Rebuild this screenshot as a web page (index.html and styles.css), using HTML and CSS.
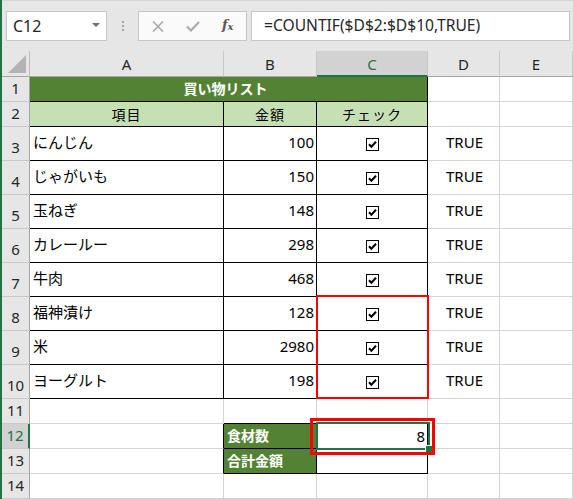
FILE: index.html
```html
<!DOCTYPE html>
<html lang="ja">
<head>
<meta charset="utf-8">
<link rel="stylesheet" href="styles.css">
</head>
<body>
<div class="app">
  <div class="fbar">
    <div class="namebox"><span class="nb-text">C12</span><span class="arrow"></span></div>
    <div class="grip"><i></i><i></i><i></i></div>
    <div class="btns">
      <svg class="ico" width="12" height="11" viewBox="0 0 12 11"><path d="M1 0.5 L11 10.5 M11 0.5 L1 10.5" stroke="#a9a9a9" stroke-width="1.6" fill="none"/></svg>
      <svg class="ico" width="14" height="11" viewBox="0 0 14 11"><path d="M1 5.5 L5 9.5 L13 1" stroke="#a9a9a9" stroke-width="2" fill="none"/></svg>
      <span class="fx">f<sub>x</sub></span>
    </div>
    <div class="formula">=COUNTIF($D$2:$D$10,TRUE)</div>
  </div>

  <div class="sheet">
    <!-- header -->
    <div class="corner"><span class="tri"></span></div>
    <div class="ch">A</div>
    <div class="ch">B</div>
    <div class="ch sel">C</div>
    <div class="ch">D</div>
    <div class="ch">E</div>

    <!-- row 1 -->
    <div class="rh">1</div>
    <div class="c title bk-r bk-b">買い物リスト</div>
    <div class="c"></div>
    <div class="c"></div>

    <!-- row 2 -->
    <div class="rh">2</div>
    <div class="c head bk-r bk-b">項目</div>
    <div class="c head bk-r bk-b">金額</div>
    <div class="c head bk-r bk-b">チェック</div>
    <div class="c"></div>
    <div class="c"></div>

    <!-- row 3 -->
    <div class="rh">3</div>
    <div class="c bk-r bk-b">にんじん</div>
    <div class="c num bk-r bk-b">100</div>
    <div class="c chk bk-r bk-b"><svg width="13" height="13" viewBox="0 0 13 13"><rect x="0.5" y="0.5" width="12" height="12" fill="#fff" stroke="#000"/><path d="M3 6.3 L5.4 8.8 L10 3.8" fill="none" stroke="#000" stroke-width="2"/></svg></div>
    <div class="c bool">TRUE</div>
    <div class="c"></div>

    <!-- row 4 -->
    <div class="rh">4</div>
    <div class="c bk-r bk-b">じゃがいも</div>
    <div class="c num bk-r bk-b">150</div>
    <div class="c chk bk-r bk-b"><svg width="13" height="13" viewBox="0 0 13 13"><rect x="0.5" y="0.5" width="12" height="12" fill="#fff" stroke="#000"/><path d="M3 6.3 L5.4 8.8 L10 3.8" fill="none" stroke="#000" stroke-width="2"/></svg></div>
    <div class="c bool">TRUE</div>
    <div class="c"></div>

    <!-- row 5 -->
    <div class="rh">5</div>
    <div class="c bk-r bk-b">玉ねぎ</div>
    <div class="c num bk-r bk-b">148</div>
    <div class="c chk bk-r bk-b"><svg width="13" height="13" viewBox="0 0 13 13"><rect x="0.5" y="0.5" width="12" height="12" fill="#fff" stroke="#000"/><path d="M3 6.3 L5.4 8.8 L10 3.8" fill="none" stroke="#000" stroke-width="2"/></svg></div>
    <div class="c bool">TRUE</div>
    <div class="c"></div>

    <!-- row 6 -->
    <div class="rh">6</div>
    <div class="c bk-r bk-b">カレールー</div>
    <div class="c num bk-r bk-b">298</div>
    <div class="c chk bk-r bk-b"><svg width="13" height="13" viewBox="0 0 13 13"><rect x="0.5" y="0.5" width="12" height="12" fill="#fff" stroke="#000"/><path d="M3 6.3 L5.4 8.8 L10 3.8" fill="none" stroke="#000" stroke-width="2"/></svg></div>
    <div class="c bool">TRUE</div>
    <div class="c"></div>

    <!-- row 7 -->
    <div class="rh">7</div>
    <div class="c bk-r bk-b">牛肉</div>
    <div class="c num bk-r bk-b">468</div>
    <div class="c chk bk-r bk-b"><svg width="13" height="13" viewBox="0 0 13 13"><rect x="0.5" y="0.5" width="12" height="12" fill="#fff" stroke="#000"/><path d="M3 6.3 L5.4 8.8 L10 3.8" fill="none" stroke="#000" stroke-width="2"/></svg></div>
    <div class="c bool">TRUE</div>
    <div class="c"></div>

    <!-- row 8 -->
    <div class="rh">8</div>
    <div class="c bk-r bk-b">福神漬け</div>
    <div class="c num bk-r bk-b">128</div>
    <div class="c chk bk-r bk-b"><svg width="13" height="13" viewBox="0 0 13 13"><rect x="0.5" y="0.5" width="12" height="12" fill="#fff" stroke="#000"/><path d="M3 6.3 L5.4 8.8 L10 3.8" fill="none" stroke="#000" stroke-width="2"/></svg></div>
    <div class="c bool">TRUE</div>
    <div class="c"></div>

    <!-- row 9 -->
    <div class="rh">9</div>
    <div class="c bk-r bk-b">米</div>
    <div class="c num bk-r bk-b">2980</div>
    <div class="c chk bk-r bk-b"><svg width="13" height="13" viewBox="0 0 13 13"><rect x="0.5" y="0.5" width="12" height="12" fill="#fff" stroke="#000"/><path d="M3 6.3 L5.4 8.8 L10 3.8" fill="none" stroke="#000" stroke-width="2"/></svg></div>
    <div class="c bool">TRUE</div>
    <div class="c"></div>

    <!-- row 10 -->
    <div class="rh">10</div>
    <div class="c bk-r bk-b">ヨーグルト</div>
    <div class="c num bk-r bk-b">198</div>
    <div class="c chk bk-r bk-b"><svg width="13" height="13" viewBox="0 0 13 13"><rect x="0.5" y="0.5" width="12" height="12" fill="#fff" stroke="#000"/><path d="M3 6.3 L5.4 8.8 L10 3.8" fill="none" stroke="#000" stroke-width="2"/></svg></div>
    <div class="c bool">TRUE</div>
    <div class="c"></div>

    <!-- row 11 -->
    <div class="rh">11</div>
    <div class="c"></div>
    <div class="c bk-b"></div>
    <div class="c bk-b"></div>
    <div class="c"></div>
    <div class="c"></div>

    <!-- row 12 -->
    <div class="rh sel">12</div>
    <div class="c bk-r"></div>
    <div class="c label bk-r bk-b">食材数</div>
    <div class="c num short bk-r bk-b">8</div>
    <div class="c"></div>
    <div class="c"></div>

    <!-- row 13 -->
    <div class="rh">13</div>
    <div class="c bk-r"></div>
    <div class="c label bk-r bk-b">合計金額</div>
    <div class="c bk-r bk-b"></div>
    <div class="c"></div>
    <div class="c"></div>

    <!-- row 14 -->
    <div class="rh">14</div>
    <div class="c"></div>
    <div class="c"></div>
    <div class="c"></div>
    <div class="c"></div>
    <div class="c"></div>
  </div>

  <div class="selection"></div>
  <div class="handle"></div>
  <div class="redbox red-range"></div>
  <div class="redbox red-cell"></div>
</div>
</body>
</html>
```

FILE: styles.css
```css
* { box-sizing: border-box; }
html, body { margin: 0; padding: 0; }
body {
  width: 573px;
  height: 499px;
  overflow: hidden;
  background: #e6e6e6;
  font-family: "Noto Sans", "Noto Sans CJK JP", sans-serif;
}
.app {
  position: relative;
  width: 573px;
  height: 499px;
  overflow: hidden;
}
.app::before {
  content: "";
  position: absolute;
  left: 0; top: 0;
  width: 2px; height: 100%;
  background: #217346;
  z-index: 5;
}

/* formula bar */
.fbar {
  height: 51px;
  display: flex;
  align-items: flex-start;
  padding: 11px 0 0 6px;
  border-top: 1px solid #d5d5d5;
  background: #e6e6e6;
}
.namebox {
  width: 101px;
  height: 30px;
  margin-top: -1px;
  background: #fff;
  border: 1px solid #c6c6c6;
  display: flex;
  align-items: center;
  justify-content: space-between;
  padding: 0 6px 0 6px;
}
.nb-text {
  font-size: 16px;
  color: #262626;
}
.arrow {
  width: 0; height: 0;
  border-left: 4px solid transparent;
  border-right: 4px solid transparent;
  border-top: 4px solid #707070;
  margin-top: -2px;
}
.grip {
  width: 31px;
  height: 30px;
  display: flex;
  flex-direction: column;
  align-items: center;
  justify-content: center;
  gap: 2px;
  margin-top: -1px;
}
.grip i {
  display: block;
  width: 2px;
  height: 2px;
  background: #a6a6a6;
}
.btns {
  width: 109px;
  height: 30px;
  margin-top: -1px;
  background: #fafafa;
  border: 1px solid #c6c6c6;
  display: flex;
  align-items: center;
  padding-left: 13px;
}
.btns .ico:nth-child(1) { margin-right: 22px; }
.btns .ico:nth-child(2) { margin-right: 22px; }
.fx {
  font-family: "DejaVu Serif", "Liberation Serif", serif;
  font-style: italic;
  font-weight: bold;
  font-size: 13px;
  color: #595959;
  margin-top: -4px;
}
.fx sub {
  font-size: 10px;
  vertical-align: -1px;
}
.formula {
  margin-left: 4px;
  margin-top: -1px;
  width: 319px;
  height: 30px;
  background: #fff;
  border: 1px solid #c6c6c6;
  font-size: 15.6px;
  color: #262626;
  line-height: 27px;
  padding-left: 12px;
}

/* sheet grid */
.sheet {
  display: grid;
  grid-template-columns: 30px 194px 93px 111px 72px 1fr;
  grid-template-rows: 26px 25px 25px repeat(8, 34px) repeat(4, 25px);
  background: #fff;
  height: 448px;
}
.corner {
  background: #e6e6e6;
  border-right: 1px solid #bdbdbd;
  border-bottom: 1px solid #a6a6a6;
  position: relative;
}
.tri {
  position: absolute;
  right: 3px;
  bottom: 3px;
  width: 18px;
  height: 18px;
  background: #b4b4b4;
  clip-path: polygon(100% 0, 100% 100%, 0 100%);
}
.ch {
  background: #e6e6e6;
  border-right: 1px solid #c8c8c8;
  border-bottom: 1px solid #a6a6a6;
  display: flex;
  align-items: center;
  justify-content: center;
  font-size: 15px;
  color: #262626;
  padding-top: 1px;
}
.ch.sel {
  background: #d2d2d2;
  color: #217346;
  border-bottom: 2px solid #217346;
}
.rh {
  background: #e6e6e6;
  border-right: 1px solid #a6a6a6;
  border-bottom: 1px solid #c8c8c8;
  display: flex;
  align-items: flex-end;
  justify-content: center;
  font-size: 15px;
  line-height: 21px;
  padding-bottom: 2px;
  padding-left: 2px;
  color: #262626;
}
.rh.sel {
  background: #d2d2d2;
  color: #217346;
  border-right: 2px solid #217346;
}
.c {
  border-right: 1px solid #d4d4d4;
  border-bottom: 1px solid #d4d4d4;
  display: flex;
  align-items: center;
  padding: 0 3px 4px 3px;
  font-size: 15px;
  color: #000;
  white-space: nowrap;
}
.bk-r { border-right-color: #000; }
.bk-b { border-bottom-color: #000; }
.title {
  grid-column: span 3;
  background: #548235;
  color: #fff;
  font-weight: bold;
  font-size: 14px;
  justify-content: center;
  padding: 0 6px 2px 0;
}
.head {
  background: #c6e0b4;
  justify-content: center;
  font-size: 14px;
  letter-spacing: 1px;
  padding-bottom: 1px;
}
.num { justify-content: flex-end; padding-right: 2px; }
.num.short { padding-bottom: 1px; }
.chk { justify-content: center; padding: 1px 0 0 0; }
.bool { justify-content: center; padding-left: 5px; }
.label {
  background: #548235;
  color: #fff;
  font-weight: bold;
  font-size: 14px;
  padding-bottom: 2px;
}

/* overlays */
.selection {
  position: absolute;
  left: 316px;
  top: 422px;
  width: 114px;
  height: 28px;
  border: 2px solid #217346;
}
.handle {
  position: absolute;
  left: 425px;
  top: 445px;
  width: 8px;
  height: 8px;
  background: #217346;
  border: 1px solid #fff;
}
.redbox {
  position: absolute;
  border-style: solid;
  border-color: #ff0000;
}
.red-range {
  left: 316px;
  top: 295px;
  width: 113px;
  height: 104px;
  border-width: 2px;
}
.red-cell {
  left: 310px;
  top: 418px;
  width: 125px;
  height: 37px;
  border-width: 3px;
}
```
